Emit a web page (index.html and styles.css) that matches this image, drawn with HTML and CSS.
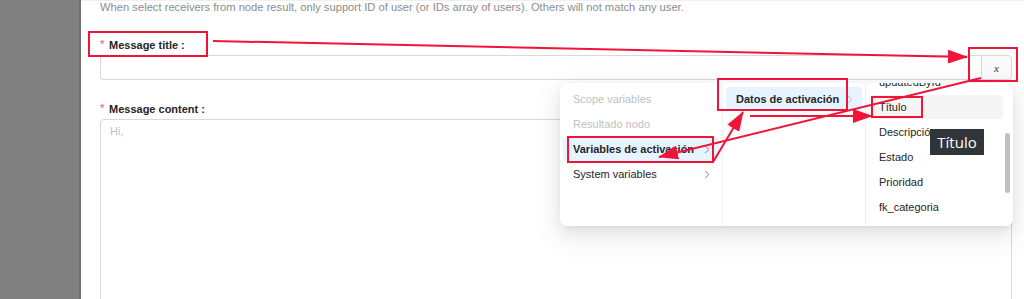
FILE: index.html
```html
<!DOCTYPE html>
<html lang="en">
<head>
    <meta charset="UTF-8">
    <title>Message node settings</title>
    <link rel="stylesheet" href="styles.css">
</head>
<body>
    <div class="page">
        <aside class="mask"></aside>

        <main class="drawer">
            <p class="hint">When select receivers from node result, only support ID of user (or IDs array of users). Others will not match any user.</p>

            <div class="field">
                <label class="label"><span class="req">*</span>Message title<span class="colon">:</span></label>
                <div class="input-group">
                    <input class="input" type="text">
                    <span class="addon"><i>x</i></span>
                </div>
            </div>

            <div class="field field-content">
                <label class="label"><span class="req">*</span>Message content<span class="colon">:</span></label>
                <textarea class="textarea" placeholder="Hi,"></textarea>
            </div>
        </main>

        <!-- variable picker dropdown -->
        <div class="cascader">
            <ul class="menu menu-first">
                <li class="item disabled">Scope variables</li>
                <li class="item disabled">Resultado nodo</li>
                <li class="item active">Variables de activación
                    <svg class="chev" width="6" height="9" viewBox="0 0 6 9"><polyline points="1,1 5,4.5 1,8" /></svg>
                </li>
                <li class="item">System variables
                    <svg class="chev" width="6" height="9" viewBox="0 0 6 9"><polyline points="1,1 5,4.5 1,8" /></svg>
                </li>
            </ul>
            <ul class="menu menu-second">
                <li class="item active">Datos de activación
                    <svg class="chev light" width="6" height="9" viewBox="0 0 6 9"><polyline points="1,1 5,4.5 1,8" /></svg>
                </li>
            </ul>
            <div class="menu menu-third">
                <ul class="scroll-list">
                    <li class="item">updatedById</li>
                    <li class="item hover">Título</li>
                    <li class="item">Descripción</li>
                    <li class="item">Estado</li>
                    <li class="item">Prioridad</li>
                    <li class="item">fk_categoria</li>
                </ul>
                <span class="scrollbar"></span>
            </div>
        </div>

        <div class="tooltip">Título</div>

        <!-- red annotations drawn over the screenshot -->
        <svg class="notes" width="1024" height="299" viewBox="0 0 1024 299">
            <defs>
                <marker id="head" markerWidth="10" markerHeight="7" refX="9.5" refY="3.5" orient="auto" markerUnits="strokeWidth">
                    <polygon points="0 0, 10 3.5, 0 7" fill="#f01438" />
                </marker>
            </defs>
            <rect x="89" y="32" width="118" height="24" class="note-box" />
            <rect x="969" y="48" width="48" height="33" class="note-box" />
            <rect x="568" y="137" width="145" height="25" class="note-box" />
            <rect x="718" y="79" width="129" height="31" class="note-box" />
            <rect x="872" y="97" width="50" height="20" class="note-box" />

            <line x1="213" y1="41" x2="967" y2="57" class="note-line" />
            <line x1="981" y1="78" x2="659" y2="157" class="note-line" />
            <line x1="713" y1="162" x2="743" y2="112" class="note-line" />
            <line x1="750" y1="116" x2="872" y2="116" class="note-line" />
        </svg>
    </div>
</body>
</html>
```

FILE: styles.css
```css
* {
    box-sizing: border-box;
}
body {
    margin: 0;
    font-family: "Liberation Sans", Arial, sans-serif;
    font-size: 11px;
    color: #1f1f1f;
    background: #fff;
}
.page {
    position: relative;
    display: flex;
    width: 1024px;
    height: 299px;
    overflow: hidden;
}
.mask {
    flex: 0 0 81px;
    background: #808080;
    border-right: 2px solid #6f6f6f;
}
.drawer {
    flex: 1;
    padding: 0 12px 0 19px;
    background: #fff;
    border-top: 1px solid #f0f0f0;
}
.hint {
    margin: 0;
    line-height: 13px;
    font-size: 11.2px;
    color: #8c8c8c;
}
.field {
    margin-top: 22px;
}
.field-content {
    margin-top: 20px;
}
.label {
    display: flex;
    align-items: center;
    height: 18px;
    font-weight: bold;
    color: #262626;
}
.req {
    width: 9px;
    color: #ff4d4f;
    font-weight: normal;
    font-size: 11px;
    margin-top: -3px;
}
.colon {
    margin-left: 3px;
}
.input-group {
    display: flex;
    height: 25px;
    margin-top: 1px;
}
.input {
    flex: 1;
    border: 1px solid #d9d9d9;
    border-right: 0;
    border-radius: 4px 0 0 4px;
    outline: none;
}
.addon {
    display: flex;
    align-items: center;
    justify-content: center;
    width: 31px;
    border: 1px solid #d9d9d9;
    border-radius: 0 4px 4px 0;
    background: #fafafa;
}
.addon i {
    font-family: "Liberation Serif", serif;
    font-size: 11px;
    color: #333;
}
.textarea {
    display: block;
    width: 100%;
    height: 200px;
    margin-top: 1px;
    padding: 5px 9px;
    border: 1px solid #d9d9d9;
    border-radius: 4px;
    font-family: inherit;
    font-size: 11px;
    resize: none;
}
.textarea::placeholder {
    color: #bfbfbf;
}

/* dropdown */
.cascader {
    position: absolute;
    left: 560px;
    top: 83px;
    display: flex;
    width: 453px;
    height: 143px;
    background: #fff;
    border-radius: 7px;
    box-shadow: 0 6px 16px rgba(0,0,0,0.08), 0 3px 6px -4px rgba(0,0,0,0.12), 0 9px 28px 8px rgba(0,0,0,0.05);
    overflow: hidden;
}
.menu {
    margin: 0;
    padding: 4px 3px;
    list-style: none;
}
.menu-first {
    width: 163px;
    border-right: 1px solid #f0f0f0;
}
.menu-second {
    width: 143px;
    border-right: 1px solid #f0f0f0;
}
.menu-third {
    position: relative;
    flex: 1;
    padding: 0 10px 0 3px;
    overflow: hidden;
}
.scroll-list {
    margin: -13px 0 0;
    padding: 0;
    list-style: none;
}
.item {
    display: flex;
    align-items: center;
    justify-content: space-between;
    height: 24px;
    margin-bottom: 1px;
    padding: 0 9px 0 10px;
    border-radius: 4px;
    white-space: nowrap;
    color: #262626;
}
.item.disabled {
    color: #bfbfbf;
}
.item.active {
    background: #e6f4ff;
    font-weight: bold;
}
.item.hover {
    background: #f5f5f5;
}
.chev {
    flex: none;
    fill: none;
    stroke: #8c8c8c;
    stroke-width: 1;
}
.chev.light {
    stroke: #bfbfbf;
}
.scrollbar {
    position: absolute;
    right: 3px;
    top: 50px;
    width: 5px;
    height: 60px;
    border-radius: 3px;
    background: #c1c1c1;
}
.tooltip {
    position: absolute;
    left: 930px;
    top: 129px;
    width: 54px;
    height: 26px;
    display: flex;
    align-items: center;
    justify-content: center;
    background: #30353a;
    color: #fff;
    font-family: "Open Sans", sans-serif;
    font-size: 15px;
}

/* annotations */
.notes {
    position: absolute;
    left: 0;
    top: 0;
    pointer-events: none;
}
.note-box {
    fill: none;
    stroke: #f01438;
    stroke-width: 2;
}
.note-line {
    stroke: #f01438;
    stroke-width: 2;
    marker-end: url(#head);
}
```
